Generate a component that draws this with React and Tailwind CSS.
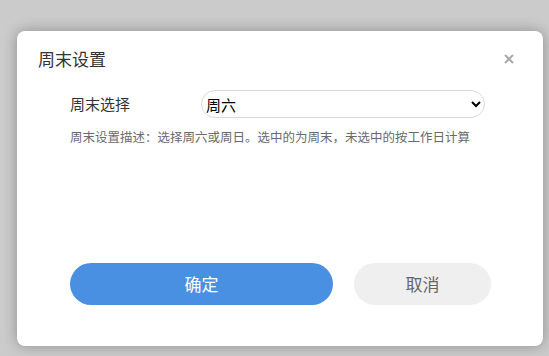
import React from "react";

export default function App() {
  const font = { fontFamily: '"Noto Sans CJK SC", "Noto Sans", sans-serif' };
  return (
    <div className="w-[549px] h-[356px] bg-[#cbcbcb] overflow-hidden pt-[31px] pl-[17px]" style={font}>
      <div className="w-[526px] h-[315px] bg-white rounded-[8px] shadow-[0_0_14px_rgba(0,0,0,0.3)] flex flex-col">
        <div className="mt-[16px] h-[24px] flex items-center justify-between pl-[21px] pr-[29px]">
          <span className="text-[17px] leading-[24px] text-[#333]">周末设置</span>
          <svg width="10" height="10" viewBox="0 0 10 10">
            <path d="M1 1 L9 9 M9 1 L1 9" stroke="#a8a8a8" strokeWidth="2" strokeLinecap="butt" />
          </svg>
        </div>
        <div className="mt-[19px] h-[28px] flex items-center pl-[53px]">
          <span className="w-[131px] text-[15px] text-[#333]">周末选择</span>
          <select className="w-[284px] h-[28px] rounded-full border border-[#d9d9d9] bg-white text-[15px] text-black pl-[0px] pr-[6px] outline-none">
            <option>周六</option>
            <option>周日</option>
          </select>
        </div>
        <div className="mt-[10px] pl-[53px] text-[12.5px] leading-[18px] text-[#6a6a6a]">
          周末设置描述：选择周六或周日。选中的为周末，未选中的按工作日计算
        </div>
        <div className="mt-auto mb-[41px] flex pl-[53px] gap-[21px]">
          <button className="w-[263px] h-[42px] rounded-full bg-[#4a90e2] text-white text-[17px]">确定</button>
          <button className="w-[137px] h-[42px] rounded-full bg-[#efefef] text-[#666] text-[17px]">取消</button>
        </div>
      </div>
    </div>
  );
}
